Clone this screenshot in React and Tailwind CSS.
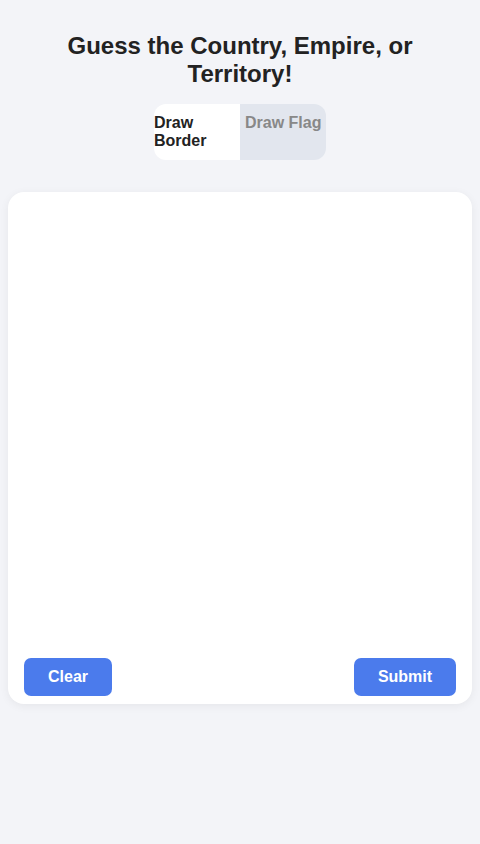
import React from "react";

export default function App() {
  return (
    <div
      className="min-h-[844px] bg-[#f3f4f8] flex flex-col items-center"
      style={{ fontFamily: '"Liberation Sans", Arial, sans-serif' }}
    >
      <h1 className="mt-[32px] px-[40px] text-center text-[24px] leading-[28px] font-bold text-[#222]">
        Guess the Country, Empire, or Territory!
      </h1>

      <div className="mt-[16px] flex w-[172px] h-[56px] rounded-[12px] overflow-hidden">
        <button className="w-[86px] bg-white text-left py-[10px] text-[16px] leading-[18px] font-bold text-[#222] self-stretch flex items-start">
          Draw Border
        </button>
        <button className="w-[86px] bg-[#e2e6ee] text-left pl-[5px] py-[10px] text-[16px] leading-[18px] font-bold text-[#888] flex items-start whitespace-nowrap">
          Draw Flag
        </button>
      </div>

      <div className="mt-[32px] w-[464px] h-[512px] bg-white rounded-[16px] shadow-[0_2px_10px_rgba(0,0,0,0.06)] flex flex-col p-[16px] pb-[8px]">
        <div className="flex-1" />
        <div className="flex justify-between">
          <button className="w-[88px] h-[38px] rounded-[7px] bg-[#4b7bec] text-white text-[16px] font-bold">
            Clear
          </button>
          <button className="w-[102px] h-[38px] rounded-[7px] bg-[#4b7bec] text-white text-[16px] font-bold">
            Submit
          </button>
        </div>
      </div>
    </div>
  );
}
